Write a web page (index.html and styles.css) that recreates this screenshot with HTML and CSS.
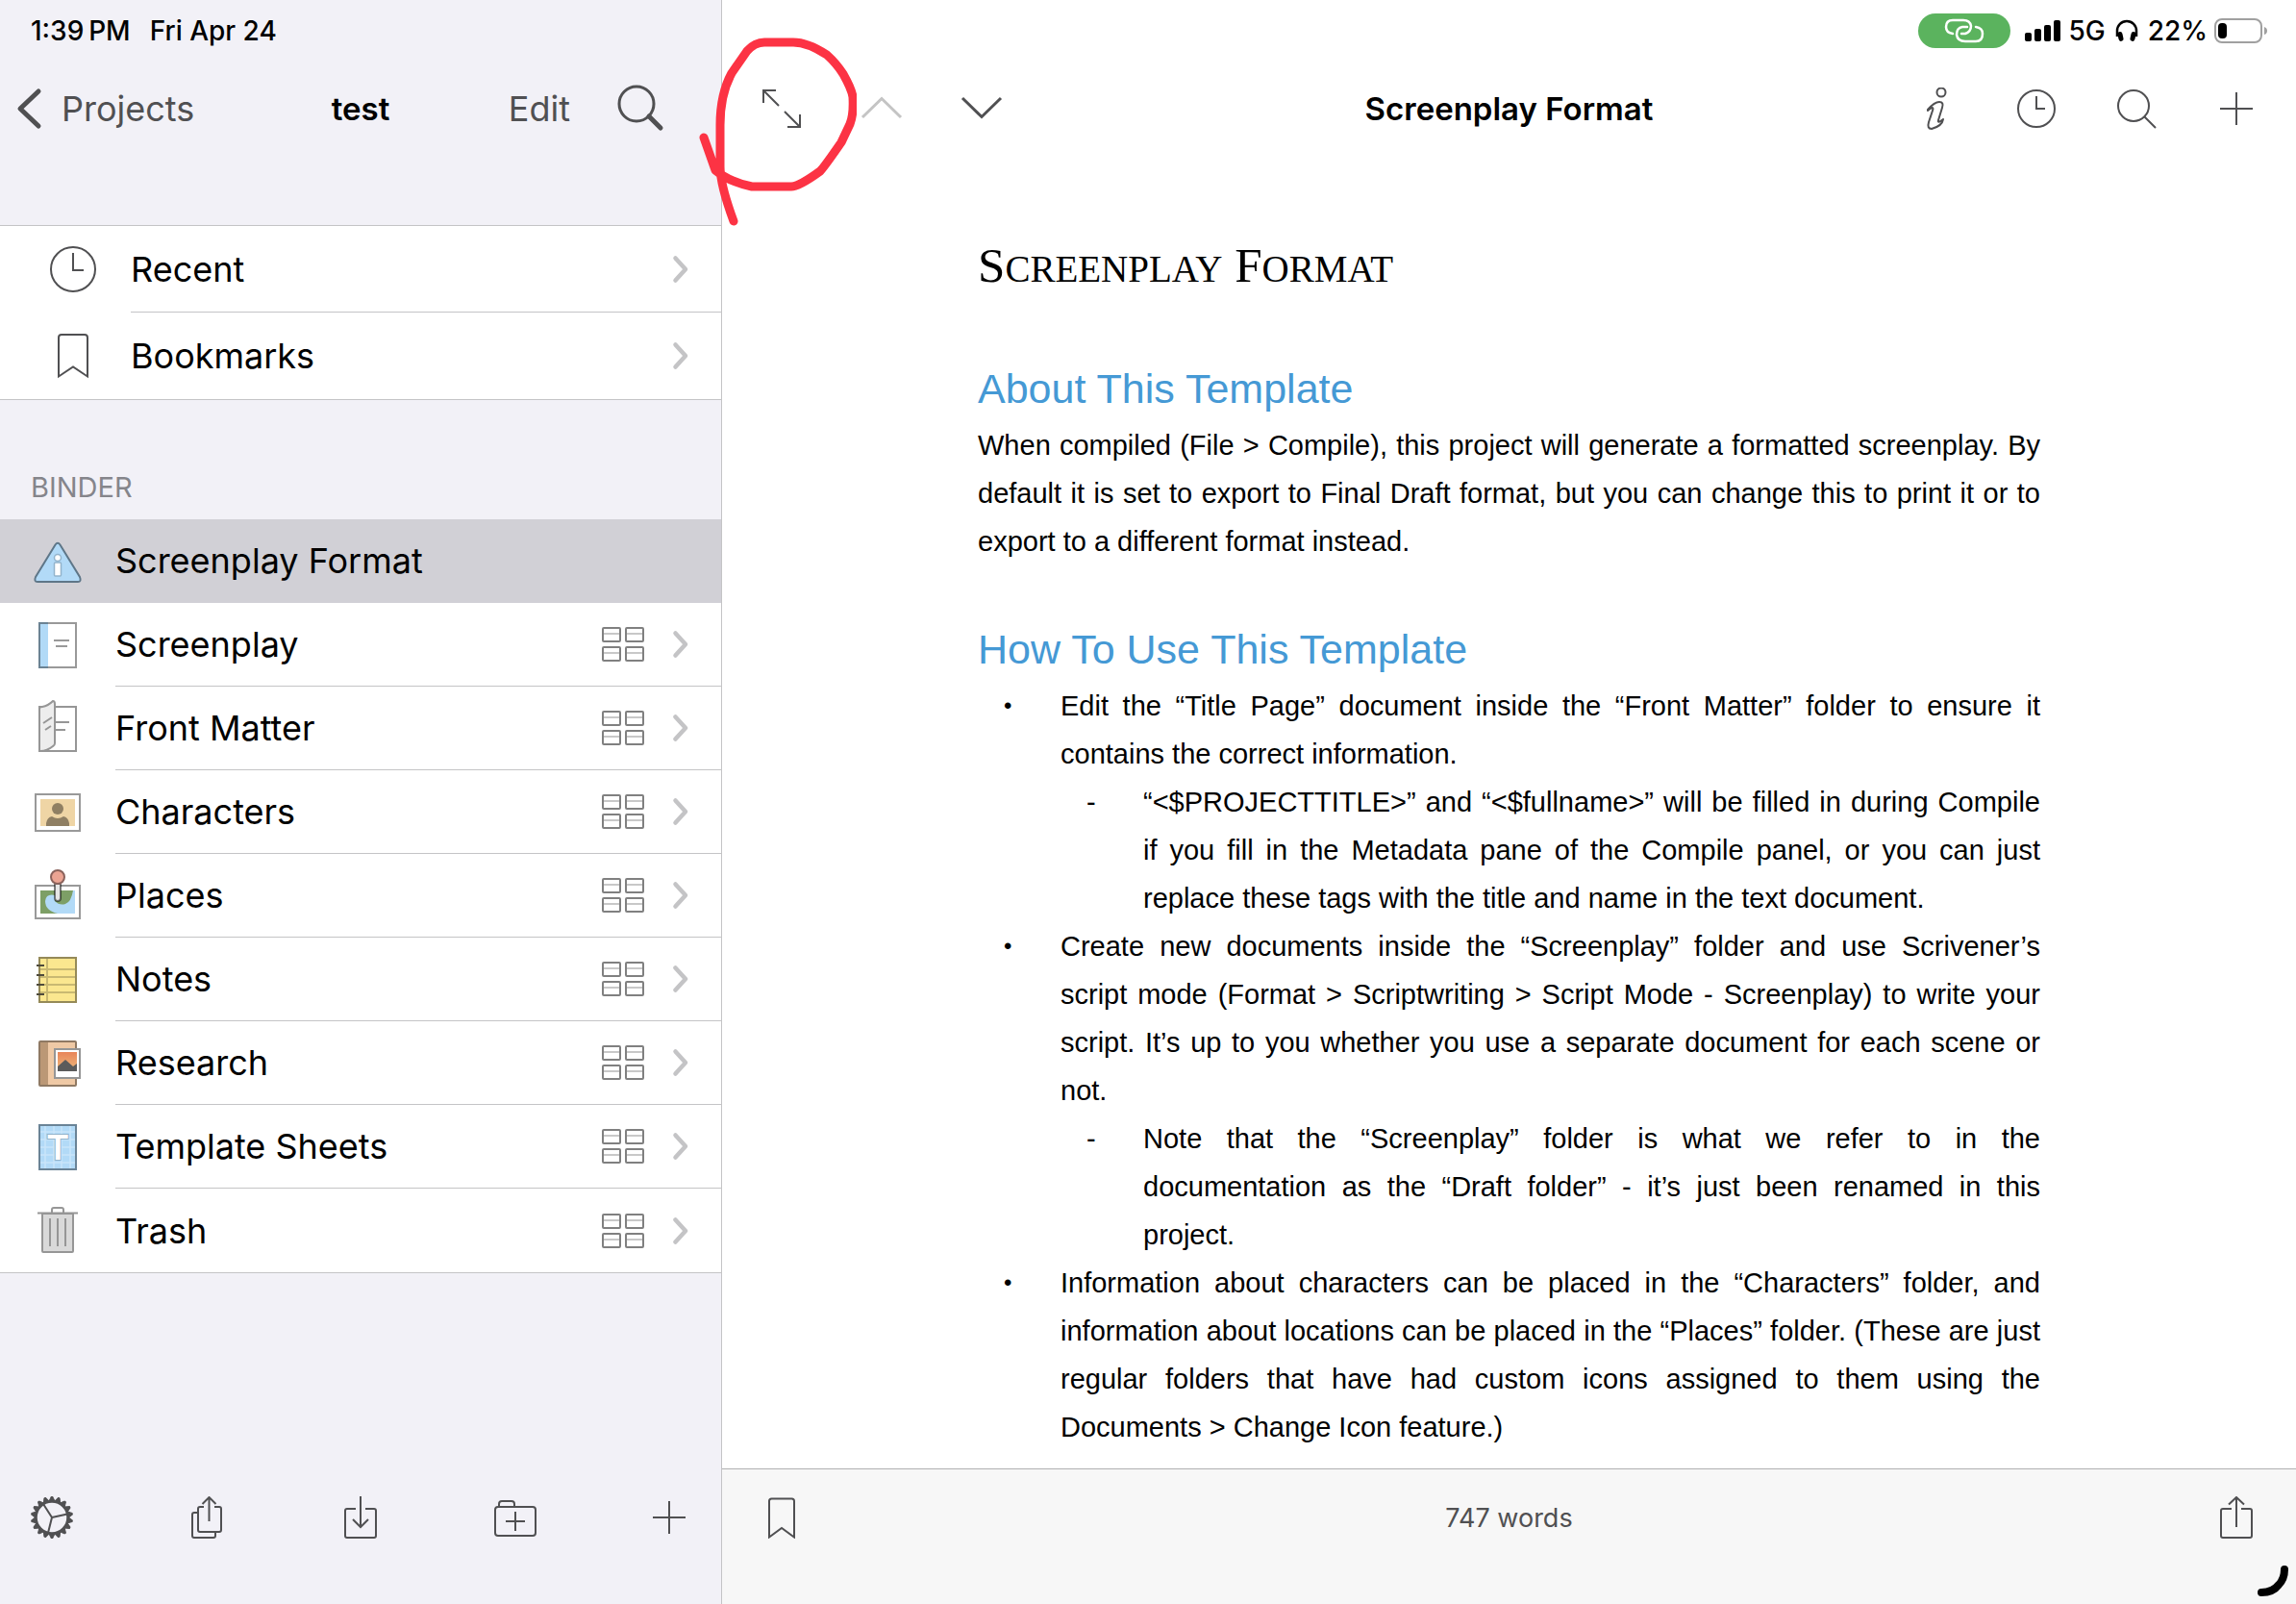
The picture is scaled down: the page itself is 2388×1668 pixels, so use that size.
FILE: index.html
```html
<!DOCTYPE html>
<html lang="en">
<head>
<meta charset="utf-8">
<meta name="viewport" content="width=device-width, initial-scale=1">
<title>Screenplay Format</title>
<link rel="stylesheet" href="styles.css">
</head>
<body>
<svg class="sprite" aria-hidden="true">
  <symbol id="chevron" viewBox="0 0 18 30"><path d="M3.500 3.500L14 15L3.500 26.500" fill="none" stroke="#c4c4c6" stroke-width="4.500" stroke-linecap="round" stroke-linejoin="round"/></symbol>
  <symbol id="cards" viewBox="0 0 44 36">
    <path d="M2 7h16M26 7h16M2 27h16M26 27h16" stroke="#c8c8c8" stroke-width="2"/>
    <g fill="none" stroke="#808080" stroke-width="2"><rect x="1" y="1" width="18" height="14" rx="1"/><rect x="25" y="1" width="18" height="14" rx="1"/><rect x="1" y="21" width="18" height="14" rx="1"/><rect x="25" y="21" width="18" height="14" rx="1"/></g>
  </symbol>
  <symbol id="plus" viewBox="0 0 44 44"><path d="M22 5v34M5 22h34" stroke="#505052" stroke-width="2"/></symbol>
  <symbol id="bookmark" viewBox="0 0 44 44"><path d="M9 42.500V5Q9 2.500 11.500 2.500H32.500Q35 2.500 35 5V42.500L22 33Z" fill="none" stroke="#505052" stroke-width="2"/></symbol>
  <symbol id="tooth" viewBox="0 0 44 44"><path d="M19 5L21.500 0H22.500L25 5ZM19 39L21.500 44H22.500L25 39Z" fill="#505052"/></symbol>
</svg>

<div class="app">
  <aside class="sidebar">
    <div class="status"><time>1:39&thinsp;PM</time><time>Fri Apr 24</time></div>
    <header class="side-bar">
      <button class="back" type="button">
        <svg width="28" height="44" viewBox="0 0 28 44"><path d="M24 4L5 22L24 40" fill="none" stroke="#505052" stroke-width="5" stroke-linecap="round" stroke-linejoin="round"/></svg>
        Projects
      </button>
      <h2 class="bar-title">test</h2>
      <div class="side-actions">
        <button class="text-button" type="button">Edit</button>
        <button class="icon-button" type="button" aria-label="Search projects">
          <svg width="50" height="50" viewBox="0 0 50 50" fill="none" stroke="#505052"><circle cx="21" cy="20" r="18" stroke-width="3"/><path d="M34 33L46 45" stroke-width="5" stroke-linecap="round"/></svg>
        </button>
      </div>
    </header>

    <nav class="lists">
      <ul class="group shortcuts">
        <li><a class="row" href="#recent">
          <svg class="row-icon" width="50" height="50" viewBox="-25 -25 50 50" fill="none" stroke="#505052" stroke-width="2"><circle r="23"/><path d="M0 -17V1H11"/></svg>
          <span class="row-body">Recent<svg class="chevron" width="18" height="30"><use href="#chevron"/></svg></span>
        </a></li>
        <li><a class="row" href="#bookmarks">
          <svg class="row-icon" width="50" height="50" viewBox="-25 -25 50 50" fill="none" stroke="#505052" stroke-width="2"><path d="M-15 21.500V-19Q-15 -22 -12 -22H12Q15 -22 15 -19V21.500L0 11.500Z"/></svg>
          <span class="row-body">Bookmarks<svg class="chevron" width="18" height="30"><use href="#chevron"/></svg></span>
        </a></li>
      </ul>

      <h3 class="group-title">BINDER</h3>
      <ul class="group binder">
        <li><a class="row selected" href="#format" aria-current="page">
          <svg class="row-icon" width="52" height="64" viewBox="-26 -32 52 64">
            <path d="M-2.500 -17.500Q0 -21 2.500 -17.500L23 16Q25 21 21 21H-21Q-25 21 -23 16Z" fill="#b2daf7" stroke="#5e7688" stroke-width="2"/>
            <circle cy="-4" r="3.500" fill="#fff" stroke="#93b4cc" stroke-width="1.500"/><rect x="-3.500" y="1" width="7" height="14" rx="1" fill="#fff" stroke="#93b4cc" stroke-width="1.500"/>
          </svg>
          <span class="row-body">Screenplay Format</span>
        </a></li>
        <li><a class="row" href="#screenplay">
          <svg class="row-icon" width="52" height="64" viewBox="-26 -32 52 64">
            <rect x="-20" y="-24" width="40" height="48" fill="#fff"/><rect x="-20" y="-24" width="10" height="48" fill="#b2daf7"/>
            <path d="M-19 -23H19V23H-19ZM-4 -5H12M-2 1H10" fill="none" stroke="#000" stroke-opacity=".4" stroke-width="2"/>
          </svg>
          <span class="row-body">Screenplay<svg class="cards" width="44" height="36"><use href="#cards"/></svg><svg class="chevron" width="18" height="30"><use href="#chevron"/></svg></span>
        </a></li>
        <li><a class="row" href="#front-matter">
          <svg class="row-icon" width="52" height="64" viewBox="-26 -32 52 64" fill="none" stroke="#969696" stroke-width="2">
            <path d="M-19 -23H19V23H-19ZM-4 -7H12M-4 1H8"/>
            <path d="M-19 -21Q-19 -23 -16 -23Q-10 -24 -5 -29Q-3 -29 -3 -26V15Q-3 17 -5 18Q-11 23 -18 23H-19Z" fill="#ededed"/>
            <path d="M-15 -6L-6 -12M-13 1L-7 -3"/>
          </svg>
          <span class="row-body">Front Matter<svg class="cards" width="44" height="36"><use href="#cards"/></svg><svg class="chevron" width="18" height="30"><use href="#chevron"/></svg></span>
        </a></li>
        <li><a class="row" href="#characters">
          <svg class="row-icon" width="52" height="64" viewBox="-26 -32 52 64">
            <rect x="-23" y="-19" width="46" height="38" fill="#fff" stroke="#999" stroke-width="2"/><rect x="-18" y="-14" width="36" height="28" fill="#efd5a5"/>
            <circle cy="-4" r="6" fill="#8f7f63"/><path d="M-12 14V11Q-11 5 -6 4Q0 8 6 4Q11 5 12 11V14Z" fill="#8f7f63"/>
          </svg>
          <span class="row-body">Characters<svg class="cards" width="44" height="36"><use href="#cards"/></svg><svg class="chevron" width="18" height="30"><use href="#chevron"/></svg></span>
        </a></li>
        <li><a class="row" href="#places">
          <svg class="row-icon" width="52" height="64" viewBox="-26 -32 52 64">
            <rect x="-23" y="-11" width="46" height="34" fill="#fff" stroke="#999" stroke-width="2"/><rect x="-18" y="-6" width="36" height="24" fill="#7d9f66"/>
            <path d="M-3 -1Q-12 -3 -13 5Q-13 15 0 18H18V-6H16Q14 6 8 8Q2 10 -3 5Z" fill="#b2daf7"/>
            <path d="M-3 -13V2Q-3 5 0 5Q3 5 3 2V-13Z" fill="#e6e6e6" stroke="#000" stroke-opacity=".5" stroke-width="2"/>
            <circle cy="-20" r="7" fill="#eba493" stroke="#8a625b" stroke-width="2"/>
          </svg>
          <span class="row-body">Places<svg class="cards" width="44" height="36"><use href="#cards"/></svg><svg class="chevron" width="18" height="30"><use href="#chevron"/></svg></span>
        </a></li>
        <li><a class="row" href="#notes">
          <svg class="row-icon" width="52" height="64" viewBox="-26 -32 52 64" fill="none" stroke-width="2">
            <rect x="-19" y="-23" width="38" height="46" fill="#fbe78f"/>
            <path d="M-11 -23V23M-19 -11H19M-19 -3H19M-19 5H19M-19 13H19" stroke="#c9b972"/>
            <rect x="-19" y="-23" width="38" height="46" stroke="#958a58"/>
            <path d="M-22 -15H-14M-22 -5H-14M-22 5H-14M-22 15H-14" stroke="#4f4b3c"/>
          </svg>
          <span class="row-body">Notes<svg class="cards" width="44" height="36"><use href="#cards"/></svg><svg class="chevron" width="18" height="30"><use href="#chevron"/></svg></span>
        </a></li>
        <li><a class="row" href="#research">
          <svg class="row-icon" width="52" height="64" viewBox="-26 -32 52 64">
            <defs><linearGradient id="sunset" x1="0" y1="0" x2="0" y2="1"><stop offset="0" stop-color="#e8855a"/><stop offset="1" stop-color="#eebb7c"/></linearGradient></defs>
            <rect x="-19" y="-23" width="38" height="46" rx="1" fill="#efc9a5"/><rect x="-19" y="-23" width="9" height="46" fill="#bb9876"/>
            <rect x="-19" y="-23" width="38" height="46" rx="1" fill="none" stroke="#8f7963" stroke-width="2"/>
            <rect x="-3" y="-15" width="26" height="30" fill="#fff" stroke="#969696" stroke-width="2"/>
            <rect width="20" height="20" y="-12" fill="url(#sunset)"/><path d="M0 8V3L8 -4L16 3L20 0V8Z" fill="#5b5b5b"/>
          </svg>
          <span class="row-body">Research<svg class="cards" width="44" height="36"><use href="#cards"/></svg><svg class="chevron" width="18" height="30"><use href="#chevron"/></svg></span>
        </a></li>
        <li><a class="row" href="#templates">
          <svg class="row-icon" width="52" height="64" viewBox="-26 -32 52 64">
            <rect x="-19" y="-23" width="38" height="46" fill="#b2daf7"/>
            <path d="M-13 -22V22M-4 -22V22M4 -22V22M13 -22V22M-18 -16H18M-18 -8H18M-18 0H18M-18 8H18M-18 16H18" stroke="#c9e5fa" stroke-width="1.500"/>
            <rect x="-19" y="-23" width="38" height="46" fill="none" stroke="#6a8396" stroke-width="2"/>
            <text class="glyph" x="0" y="13" text-anchor="middle">T</text>
          </svg>
          <span class="row-body">Template Sheets<svg class="cards" width="44" height="36"><use href="#cards"/></svg><svg class="chevron" width="18" height="30"><use href="#chevron"/></svg></span>
        </a></li>
        <li><a class="row" href="#trash">
          <svg class="row-icon" width="52" height="64" viewBox="-26 -32 52 64" fill="none" stroke="#969696" stroke-width="2">
            <path d="M-16 -18H16V21Q16 22 15 22H-15Q-16 22 -16 21Z" fill="#d9d9d9"/><path d="M-21 -18.500H21M-6 -19V-22Q-6 -24 -4 -24H4Q6 -24 6 -22V-19M-8 -13V16M0 -13V16M8 -13V16"/>
          </svg>
          <span class="row-body">Trash<svg class="cards" width="44" height="36"><use href="#cards"/></svg><svg class="chevron" width="18" height="30"><use href="#chevron"/></svg></span>
        </a></li>
      </ul>
    </nav>

    <footer class="side-footer">
      <button class="icon-button" type="button" aria-label="Settings">
        <svg width="44" height="44" viewBox="0 0 44 44" fill="none" stroke="#505052">
          <use href="#tooth"/><use href="#tooth" transform="rotate(20 22 22)"/><use href="#tooth" transform="rotate(40 22 22)"/><use href="#tooth" transform="rotate(60 22 22)"/><use href="#tooth" transform="rotate(80 22 22)"/><use href="#tooth" transform="rotate(100 22 22)"/><use href="#tooth" transform="rotate(120 22 22)"/><use href="#tooth" transform="rotate(140 22 22)"/><use href="#tooth" transform="rotate(160 22 22)"/>
          <circle cx="22" cy="22" r="16.500" stroke-width="2.500"/><path d="M22 22L13 8M22 22L38 18.500M22 22L18 38" stroke-width="2"/>
        </svg>
      </button>
      <button class="icon-button" type="button" aria-label="Export">
        <svg width="44" height="44" viewBox="0 0 44 44" fill="none" stroke="#505052" stroke-width="2"><path d="M19 11H15Q13 11 13 13V35Q13 37 15 37H35Q37 37 37 35V13Q37 11 35 11H30M24.500 1V26M17.500 8L24.500 1L31.500 8M13 17H9Q7 17 7 19V41Q7 43 9 43H29Q31 43 31 41V37"/></svg>
      </button>
      <button class="icon-button" type="button" aria-label="Import">
        <svg width="44" height="44" viewBox="0 0 44 44" fill="none" stroke="#505052" stroke-width="2"><path d="M17 13H8Q6 13 6 15V41Q6 43 8 43H36Q38 43 38 41V15Q38 13 36 13H27M22 0V32M14 24L22 32L30 24"/></svg>
      </button>
      <button class="icon-button" type="button" aria-label="New folder">
        <svg width="44" height="44" viewBox="0 0 44 44" fill="none" stroke="#505052" stroke-width="2"><path d="M5 11V8Q5 5 8 5H18Q21 5 21 8V11M22 16V36M12 26H32"/><rect x="1" y="11" width="42" height="30" rx="3"/></svg>
      </button>
      <button class="icon-button" type="button" aria-label="Add document"><svg width="44" height="44"><use href="#plus"/></svg></button>
    </footer>
  </aside>

  <main class="editor">
    <div class="status status-right">
      <span class="link-pill"><svg width="42" height="26" viewBox="0 0 42 26" fill="none" stroke="#fff" stroke-width="2.500" stroke-linecap="round"><path d="M9 16Q2 15 2 9Q2 2 9 2H20Q27 2 28 8Q28 14 22 16L18 16"/><path d="M33 9Q40 10 40 16Q40 24 33 24H22Q14 24 13 17Q13 10 19 9H24"/></svg></span>
      <svg class="signal" width="38" height="24" viewBox="0 0 38 24"><rect y="14" width="7" height="9" rx="2"/><rect x="10" y="10" width="7" height="13" rx="2"/><rect x="20" y="6" width="7" height="17" rx="2"/><rect x="30" y="1" width="7" height="22" rx="2"/></svg>
      <span>5G</span>
      <svg class="phones" width="24" height="24" viewBox="0 0 24 24"><path d="M2 18V12A10 10 0 0 1 22 12V18" fill="none" stroke="#000" stroke-width="2.500"/><rect x="3" y="13" width="5" height="10" rx="2.500" transform="rotate(-12 5 18)"/><rect x="16" y="13" width="5" height="10" rx="2.500" transform="rotate(12 19 18)"/></svg>
      <span>22%</span>
      <svg class="battery" width="56" height="26" viewBox="0 0 56 26"><rect x="1" y="1" width="48" height="24" rx="7" fill="none" stroke="#a0a0a0" stroke-width="2"/><rect x="4" y="5" width="9" height="16" rx="4"/><path d="M52 9Q55 10 55 13Q55 16 52 17Z" fill="#a0a0a0"/></svg>
    </div>
    <header class="editor-bar">
      <div class="tools">
        <button class="tool" type="button" aria-label="Full screen"><svg width="44" height="44" viewBox="0 0 44 44" fill="none" stroke="#505052" stroke-width="2"><path d="M16 3H3V16M3 3L19 19M28 41H41V28M41 41L25 25"/></svg></button>
        <button class="tool" type="button" aria-label="Previous" disabled><svg width="44" height="44" viewBox="0 0 44 44" fill="none" stroke="#c4c4c4" stroke-width="3"><path d="M2 31L22 11.500L42 31"/></svg></button>
        <button class="tool" type="button" aria-label="Next"><svg width="44" height="44" viewBox="0 0 44 44" fill="none" stroke="#505052" stroke-width="3"><path d="M2 11L22 30.500L42 11"/></svg></button>
      </div>
      <h2 class="bar-title">Screenplay Format</h2>
      <div class="tools tools-end">
        <button class="tool" type="button" aria-label="Info"><svg width="44" height="44" viewBox="0 0 44 44" fill="none" stroke="#505052" stroke-width="2"><circle cx="27" cy="5" r="4.500"/><path d="M13 23Q20 15 25 15Q30 15 28 21L24 34Q23 38 29 33Q28 40 17 43Q12 43 14 36L18 24Q20 18 13 24Z" stroke-linejoin="round"/></svg></button>
        <button class="tool" type="button" aria-label="History"><svg width="44" height="44" viewBox="0 0 44 44" fill="none" stroke="#505052" stroke-width="2"><circle cx="22" cy="22" r="19"/><path d="M22 9V22H31"/></svg></button>
        <button class="tool" type="button" aria-label="Search"><svg width="44" height="44" viewBox="0 0 44 44" fill="none" stroke="#505052" stroke-width="2"><circle cx="19" cy="19" r="16"/><path d="M30.500 30.500L42 42"/></svg></button>
        <button class="tool" type="button" aria-label="Add"><svg width="44" height="44"><use href="#plus"/></svg></button>
      </div>
    </header>

    <div class="page">
      <article class="document">
        <h1>S<span class="small-cap">creenplay</span> F<span class="small-cap">ormat</span></h1>
        <h2>About This Template</h2>
        <p>When compiled (File &gt; Compile), this project will generate a formatted screenplay. By default it is set to export to Final Draft format, but you can change this to print it or to export to a different format instead.</p>
        <h2>How To Use This Template</h2>
        <ul class="bullets">
          <li>Edit the “Title Page” document inside the “Front Matter” folder to ensure it contains the correct information.
            <ul class="dashes"><li>“&lt;$PROJECTTITLE&gt;” and “&lt;$fullname&gt;” will be filled in during Compile if you fill in the Metadata pane of the Compile panel, or you can just replace these tags with the title and name in the text document.</li></ul>
          </li>
          <li>Create new documents inside the “Screenplay” folder and use Scrivener’s script mode (Format &gt; Scriptwriting &gt; Script Mode - Screenplay) to write your script. It’s up to you whether you use a separate document for each scene or not.
            <ul class="dashes"><li>Note that the “Screenplay” folder is what we refer to in the documentation as the “Draft folder” - it’s just been renamed in this project.</li></ul>
          </li>
          <li>Information about characters can be placed in the “Characters” folder, and information about locations can be placed in the “Places” folder. (These are just regular folders that have had custom icons assigned to them using the Documents &gt; Change Icon feature.)</li>
        </ul>
      </article>
    </div>

    <footer class="editor-footer">
      <button class="tool" type="button" aria-label="Bookmark"><svg width="44" height="44"><use href="#bookmark"/></svg></button>
      <span class="words">747 words</span>
      <button class="tool" type="button" aria-label="Share"><svg width="44" height="44" viewBox="0 0 44 44" fill="none" stroke="#505052" stroke-width="2"><path d="M17 13H8Q6 13 6 15V41Q6 43 8 43H36Q38 43 38 41V15Q38 13 36 13H27M22 1V32M14 8.500L22 1L30 8.500"/></svg></button>
    </footer>
    <svg class="ink-mark" width="166" height="200" viewBox="725 36 166 200" fill="none" stroke="#fc3344" stroke-width="9" stroke-linecap="round" stroke-linejoin="round" aria-hidden="true"><path d="M732 143L744 177Q758 189 782 194H823Q831 194 853 178Q857 174 875 148L884 129Q888 119 887 101Q886 93 877 77Q870 66 860 57Q840 44 825 44H795Q785 44 777 53L761 76Q749 98 749 130V173Q749 192 763 230"/></svg>
    <svg class="corner-mark" width="36" height="36" viewBox="0 0 36 36" fill="none" stroke="#000" stroke-width="8" stroke-linecap="round" aria-hidden="true"><path d="M4 32Q16 32 22 24Q28 18 28 8"/></svg>
  </main>
</div>
</body>
</html>
```
FILE: styles.css
```css
* { box-sizing: border-box; }

body {
  margin: 0;
  color: #000;
  background: #fff;
  font-family: Inter, "Liberation Sans", sans-serif;
  font-size: 36px;
}

h1, h2, h3, p, ul { margin: 0; padding: 0; }
ul { list-style: none; }
svg { display: block; flex: none; }
button { margin: 0; padding: 0; border: 0; background: none; font: inherit; color: #505052; }
a { color: inherit; text-decoration: none; }

.sprite { position: absolute; width: 0; height: 0; }

.app { display: flex; height: 100vh; overflow: hidden; }

/* Status bar */
.status {
  display: flex;
  align-items: center;
  gap: 20px;
  height: 64px;
  padding: 0 32px;
  font-size: 28px;
  font-weight: 500;
}
.status-right { justify-content: flex-end; gap: 7px; padding-right: 29px; }
.link-pill {
  display: flex;
  align-items: center;
  justify-content: center;
  width: 96px;
  height: 36px;
  margin-right: 8px;
  border-radius: 18px;
  background: #5bb35e;
}
.phones { margin: 0 3px; }

/* Sidebar */
.sidebar {
  display: flex;
  flex-direction: column;
  flex: none;
  width: 751px;
  border-right: 1px solid #c4c4c6;
  background: #f2f1f7;
}
.side-bar {
  display: grid;
  grid-template-columns: 1fr auto 1fr;
  align-items: center;
  height: 98px;
  padding: 0 16px;
}
.back { display: flex; align-items: center; gap: 20px; }
.bar-title { font-size: 33px; font-weight: 600; line-height: 44px; }
.side-actions { display: flex; align-items: center; justify-content: flex-end; gap: 48px; padding-right: 43px; }

.lists { flex: 1; padding-top: 72px; }
.group { background: #fff; border-bottom: 1px solid #c4c4c6; }
.shortcuts { border-top: 1px solid #c4c4c6; }
.group-title {
  padding: 75px 32px 17px;
  color: #85858b;
  font-size: 29px;
  font-weight: 400;
  line-height: 32px;
}
.row { display: flex; align-items: center; height: 87px; }
.row-icon { margin: 0 34px; }
.row-body {
  display: flex;
  flex: 1;
  align-items: center;
  align-self: stretch;
  padding-right: 33px;
  border-bottom: 1px solid #c4c4c6;
}
li:last-child > .row > .row-body { border-bottom: 0; }
.chevron { margin-left: auto; }
.cards { margin-left: auto; }
.cards + .chevron { margin-left: 29px; }
.shortcuts .row { height: 90px; }
.shortcuts .row-icon { margin: 0 35px 0 51px; }
.selected { background: #d1d0d6; }
.selected .row-body { border-color: transparent; }
.glyph { font-size: 36px; font-weight: 600; fill: #fff; stroke: #93b4cc; stroke-width: 2px; paint-order: stroke; }

.side-footer {
  display: flex;
  align-items: center;
  justify-content: space-between;
  height: 141px;
  padding: 0 32px 40px;
}

/* Editor */
.editor { position: relative; display: flex; flex: 1; flex-direction: column; min-width: 0; }
.editor-bar {
  display: grid;
  grid-template-columns: 1fr auto 1fr;
  align-items: center;
  height: 98px;
  padding: 0 10px;
}
.tools { display: flex; }
.tools-end { justify-content: flex-end; }
.tool { display: flex; align-items: center; justify-content: center; width: 104px; height: 98px; }

.page { flex: 1; min-height: 0; overflow: hidden; }
.document {
  max-width: 1105px;
  margin: 0 auto;
  padding-top: 84px;
  font-family: "Liberation Sans", Arial, sans-serif;
  font-size: 29px;
  line-height: 50px;
  text-align: justify;
}
.document h1 {
  margin-bottom: 68px;
  font-family: "Liberation Serif", "Times New Roman", serif;
  font-size: 51px;
  font-weight: 400;
  line-height: 60px;
}
.small-cap { font-size: 39px; line-height: 1; text-transform: uppercase; }
.document h2 { margin-bottom: 4px; color: #4599d5; font-size: 43px; font-weight: 400; line-height: 60px; }
.document p { margin-bottom: 57px; }
.bullets li { position: relative; }
.bullets > li { padding-left: 86px; }
.dashes > li { padding-left: 86px; }
.bullets > li::before { content: "•"; position: absolute; left: 27px; font-size: 24px; }
.dashes > li::before { content: "-"; position: absolute; left: 27px; }

.editor-footer {
  display: flex;
  align-items: center;
  justify-content: space-between;
  height: 141px;
  padding: 0 10px 40px;
  border-top: 1px solid #b0b0b2;
  background: #f7f7f7;
}
.words { color: #505052; font-size: 27px; }

/* Hand-drawn marks over the page */
.ink-mark { position: absolute; top: 36px; left: -26px; pointer-events: none; }
.corner-mark { position: absolute; right: 4px; bottom: 8px; pointer-events: none; }
```
